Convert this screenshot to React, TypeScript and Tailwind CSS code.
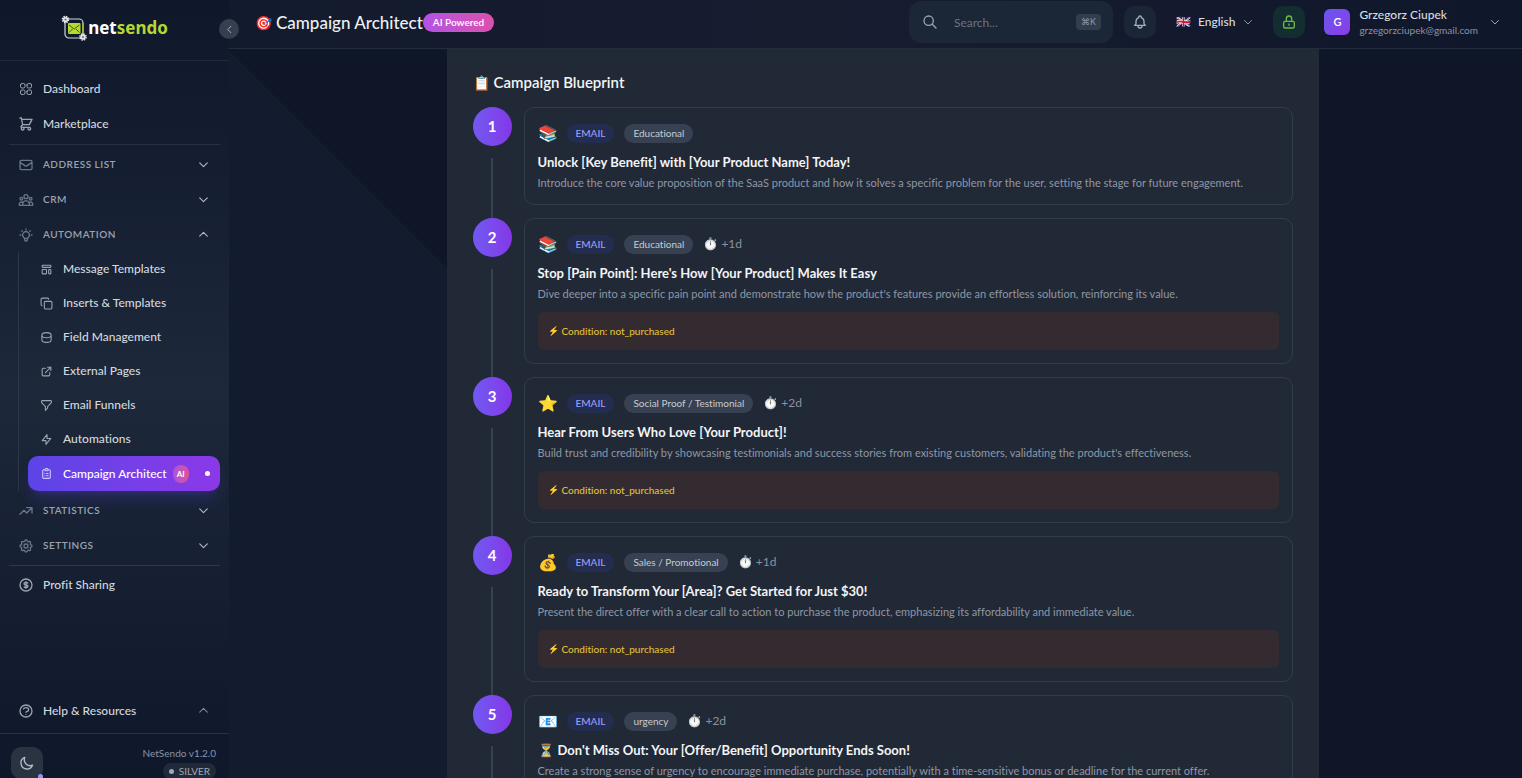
import type { ReactNode } from "react";
import type { IconType } from "react-icons";
import {
  HiOutlineBell,
  HiOutlineChevronDown,
  HiOutlineChevronLeft,
  HiOutlineChevronUp,
  HiOutlineClipboardList,
  HiOutlineCog,
  HiOutlineCurrencyDollar,
  HiOutlineExternalLink,
  HiOutlineFilter,
  HiOutlineLightBulb,
  HiOutlineLightningBolt,
  HiOutlineLockClosed,
  HiOutlineMail,
  HiOutlineMoon,
  HiOutlineQuestionMarkCircle,
  HiOutlineSearch,
  HiOutlineShoppingCart,
  HiOutlineTemplate,
  HiOutlineTrendingUp,
  HiOutlineUserGroup,
} from "react-icons/hi";
import { HiOutlineSquares2X2 } from "react-icons/hi2";
import { LuCopy } from "react-icons/lu";

function CylinderIcon({ className }: { className?: string }) {
  return (
    <svg viewBox="0 0 24 24" fill="none" stroke="currentColor" strokeWidth="2" className={className} aria-hidden="true">
      <path d="M3.500 8c0-3 3-5 8.500-5s8.500 2 8.500 5v8c0 3-3 5-8.500 5s-8.500-2-8.500-5z" />
      <path d="M3.500 9c1 2.500 4 3.500 8.500 3.500s7.500-1 8.500-3.500" />
    </svg>
  );
}

function Gear({ cx, cy }: { cx: number; cy: number }) {
  return (
    <g transform={`translate(${cx} ${cy})`}>
      <circle r="3.100" fill="none" stroke="#e5e7eb" strokeWidth="1.500" strokeDasharray="1.400 1.035" />
      <circle r="2.700" fill="#e5e7eb" />
      <circle r="1.100" fill="#64748b" />
    </g>
  );
}

function Logo() {
  return (
    <a href="#home" className="flex items-center" aria-label="netsendo">
      <svg viewBox="0 0 27 26" className="h-[26px] w-[27px]" aria-hidden="true">
        <rect x="4" y="4" width="18" height="19" rx="4" fill="none" stroke="#cbd5e1" strokeWidth="1.200" />
        <path d="M22 8v11" stroke="#a3c51f" strokeWidth="1.200" />
        <rect x="7" y="8" width="12.500" height="11" rx="1" fill="#b9d92c" />
        <path d="M8 10l5.200 4 5.200-4M8 17.500l3.500-3.500M18.500 17.500l-3.500-3.500" fill="none" stroke="#2c5a3c" strokeWidth="1" />
        <Gear cx={4.5} cy={4.5} />
        <Gear cx={22} cy={22} />
      </svg>
      <span className="font-['Noto_Sans'] text-[17px] leading-6 font-bold text-white">
        net<span className="text-[#b5d733]">sendo</span>
      </span>
    </a>
  );
}

function NavItem({ icon: Icon, children }: { icon: IconType; children: ReactNode }) {
  return (
    <a href="#nav" className="flex h-[35px] items-center gap-[9px] px-[9px] text-[12px] font-medium text-[#d3d8df]">
      <Icon className="size-4 text-[#9ca3af]" />
      {children}
    </a>
  );
}

function NavGroup({ icon: Icon, label, open }: { icon: IconType; label: string; open?: boolean }) {
  const Chevron = open ? HiOutlineChevronUp : HiOutlineChevronDown;
  return (
    <button
      type="button"
      aria-expanded={!!open}
      className="flex h-[35px] w-full items-center gap-[9px] pr-[10px] pl-[9px] text-left text-[10px] font-semibold tracking-wider text-[#9aa3b1] uppercase"
    >
      <Icon className="size-4 text-[#6b7686]" />
      <span className="flex-1">{label}</span>
      <Chevron className="size-[13px] text-[#b4bbc6]" />
    </button>
  );
}

const subItems: { icon: IconType | typeof CylinderIcon; label: string }[] = [
  { icon: HiOutlineTemplate, label: "Message Templates" },
  { icon: LuCopy, label: "Inserts & Templates" },
  { icon: CylinderIcon, label: "Field Management" },
  { icon: HiOutlineExternalLink, label: "External Pages" },
  { icon: HiOutlineFilter, label: "Email Funnels" },
  { icon: HiOutlineLightningBolt, label: "Automations" },
];

function Sidebar() {
  return (
    <aside className="relative flex h-full w-[229px] shrink-0 flex-col bg-linear-to-b from-[#0f172a] via-[#1d283a] to-[#0f172a]">
      <div className="flex h-[61px] shrink-0 items-center justify-center border-b border-[#1f2937] pb-1">
        <Logo />
      </div>
      <button
        type="button"
        aria-label="Collapse sidebar"
        className="absolute top-[19px] -right-[10px] z-10 flex size-5 items-center justify-center rounded-full bg-[#353f50] text-[#aab2be]"
      >
        <HiOutlineChevronLeft className="size-[11px]" />
      </button>
      <nav className="min-h-0 flex-1 overflow-hidden px-[9px] pt-[10px]">
        <NavItem icon={HiOutlineSquares2X2}>Dashboard</NavItem>
        <NavItem icon={HiOutlineShoppingCart}>Marketplace</NavItem>
        <hr className="mt-[3px] mb-0.5 border-[#263143]" />
        <NavGroup icon={HiOutlineMail} label="Address List" />
        <NavGroup icon={HiOutlineUserGroup} label="CRM" />
        <NavGroup icon={HiOutlineLightBulb} label="Automation" open />
        <div className="ml-[9px] border-l border-[#2c3747] pl-[9px]">
          {subItems.map(({ icon: Icon, label }) => (
            <a key={label} href="#sub" className="flex h-[34px] items-center gap-[10px] pl-3 text-[12px] font-medium text-[#d3d8df]">
              <Icon className="size-[13px] text-[#9ca3af]" />
              {label}
            </a>
          ))}
          <a
            href="#architect"
            aria-current="page"
            className="flex h-[35px] items-center rounded-[10px] bg-linear-to-r from-[#5b44e6] to-[#8b38e8] pr-[10px] pl-3 text-[12px] font-medium text-white shadow-lg shadow-[#5b44e6]/25"
          >
            <HiOutlineClipboardList className="mr-[10px] size-[13px] text-[#cfc9fb]" />
            Campaign Architect
            <span className="ml-1.5 rounded-full bg-linear-to-r from-[#a855d8] to-[#dd4f9a] px-1 text-[8px] leading-[18px] font-bold">AI</span>
            <span className="ml-auto size-[5px] rounded-full bg-white" />
          </a>
        </div>
        <div className="pt-0.5">
          <NavGroup icon={HiOutlineTrendingUp} label="Statistics" />
          <NavGroup icon={HiOutlineCog} label="Settings" />
        </div>
        <hr className="mt-0.5 mb-px border-[#2c3748]" />
        <NavItem icon={HiOutlineCurrencyDollar}>Profit Sharing</NavItem>
      </nav>
      <div className="shrink-0 px-[9px] pb-[5px]">
        <button type="button" className="flex h-[35px] w-full items-center gap-[9px] pr-[10px] pl-[9px] text-left text-[12px] font-medium text-[#d3d8df]">
          <HiOutlineQuestionMarkCircle className="size-4 text-[#9ca3af]" />
          <span className="flex-1">Help &amp; Resources</span>
          <HiOutlineChevronUp className="size-[13px] text-[#7c8594]" />
        </button>
      </div>
      <div className="flex h-[45px] shrink-0 items-start justify-between overflow-hidden border-t border-[#263143] pr-[13px] pl-[11px]">
        <button type="button" aria-label="Toggle theme" className="relative mt-[13px] flex size-8 shrink-0 items-center justify-center rounded-[10px] bg-[#2a3342] text-[#b4bbc6]">
          <HiOutlineMoon className="size-4" />
          <span className="absolute right-0 bottom-0 size-[5px] rounded-full bg-[#9a93f5]" />
        </button>
        <div className="flex shrink-0 flex-col items-end gap-[3px] pt-3">
          <span className="text-[10px] leading-[14px] text-[#8a93a3]">NetSendo v1.2.0</span>
          <span className="flex items-center gap-[5px] rounded-full bg-[#202a3a] px-1.5 text-[10px] leading-4 text-[#a0a8b5]">
            <span className="size-[5px] rounded-full bg-[#a0a8b5]" />
            SILVER
          </span>
        </div>
      </div>
    </aside>
  );
}

function Header() {
  return (
    <header className="flex h-[49px] shrink-0 items-start justify-between border-b border-[#232d3e] bg-linear-to-r from-[#121b2d] via-[#181c30] to-[#0f172a] pr-[21px] pl-[26px]">
      <div className="flex items-center pt-3">
        <h1 className="flex items-center gap-1 text-[17px] leading-[21px] font-medium text-[#eef0f4]">
          <span className="text-[14px]">🎯</span>
          Campaign Architect
        </h1>
        <span className="rounded-full bg-linear-to-r from-[#b152e6] to-[#dc4fab] px-[10px] text-[10px] leading-[19px] font-semibold text-white">AI Powered</span>
      </div>
      <div className="flex items-center pt-px">
        <div className="flex h-[42px] w-[204px] items-center rounded-xl bg-[#1b2637] pr-3 pl-[13px]">
          <HiOutlineSearch className="size-4 shrink-0 text-[#9ca3af]" />
          <input
            type="search"
            aria-label="Search"
            placeholder="Search..."
            className="ml-4 h-6 min-w-0 flex-1 bg-transparent text-[12px] text-white outline-none placeholder:text-[#6b7483]"
          />
          <kbd className="rounded-sm bg-[#333d4c] px-[5px] font-['Inter','DejaVu_Sans'] text-[9px] leading-4 text-[#8b94a2]">⌘K</kbd>
        </div>
        <button type="button" aria-label="Notifications" className="ml-[11px] flex size-8 items-center justify-center rounded-[10px] bg-[#1a2536] text-[#a5adb9]">
          <HiOutlineBell className="size-4" />
        </button>
        <button type="button" className="ml-5 flex items-center text-[12px] font-medium text-[#d8dce3]">
          <span className="mr-2 w-[14px] text-[12px]">🇬🇧</span>
          English
          <HiOutlineChevronDown className="ml-[7px] size-3 text-[#8f98a6]" />
        </button>
        <button type="button" aria-label="Security" className="ml-[19px] flex size-8 items-center justify-center rounded-[10px] bg-[#132e30] text-[#71b843]">
          <HiOutlineLockClosed className="size-4" />
        </button>
        <button type="button" className="ml-[19px] flex items-center text-left">
          <span className="flex size-[26px] items-center justify-center rounded-md bg-linear-to-br from-[#6a55f0] to-[#8a3ae8] text-[11px] font-semibold text-white">G</span>
          <span className="ml-[9px] flex flex-col">
            <span className="text-[12px] leading-4 font-medium text-[#d8dce3]">Grzegorz Ciupek</span>
            <span className="text-[10px] leading-[14px] text-[#8a93a3]">grzegorzciupek@gmail.com</span>
          </span>
          <HiOutlineChevronDown className="ml-[11px] size-3 text-[#9ca3af]" />
        </button>
      </div>
    </header>
  );
}

type Step = {
  emoji: string;
  category: string;
  delay?: string;
  titleEmoji?: string;
  title: string;
  text: string;
  condition?: string;
};

const steps: Step[] = [
  {
    emoji: "📚",
    category: "Educational",
    title: "Unlock [Key Benefit] with [Your Product Name] Today!",
    text: "Introduce the core value proposition of the SaaS product and how it solves a specific problem for the user, setting the stage for future engagement.",
  },
  {
    emoji: "📚",
    category: "Educational",
    delay: "+1d",
    title: "Stop [Pain Point]: Here's How [Your Product] Makes It Easy",
    text: "Dive deeper into a specific pain point and demonstrate how the product's features provide an effortless solution, reinforcing its value.",
    condition: "not_purchased",
  },
  {
    emoji: "⭐",
    category: "Social Proof / Testimonial",
    delay: "+2d",
    title: "Hear From Users Who Love [Your Product]!",
    text: "Build trust and credibility by showcasing testimonials and success stories from existing customers, validating the product's effectiveness.",
    condition: "not_purchased",
  },
  {
    emoji: "💰",
    category: "Sales / Promotional",
    delay: "+1d",
    title: "Ready to Transform Your [Area]? Get Started for Just $30!",
    text: "Present the direct offer with a clear call to action to purchase the product, emphasizing its affordability and immediate value.",
    condition: "not_purchased",
  },
  {
    emoji: "📧",
    category: "urgency",
    delay: "+2d",
    titleEmoji: "⏳",
    title: "Don't Miss Out: Your [Offer/Benefit] Opportunity Ends Soon!",
    text: "Create a strong sense of urgency to encourage immediate purchase, potentially with a time-sensitive bonus or deadline for the current offer.",
    condition: "not_purchased",
  },
];

function StepRow({ step, number }: { step: Step; number: number }) {
  return (
    <li className="flex gap-3">
      <div className="flex w-[39px] shrink-0 flex-col items-center">
        <span className="flex size-[39px] shrink-0 items-center justify-center rounded-full bg-linear-to-r from-[#7059f0] to-[#8436e8] text-[15px] font-bold text-white">
          {number}
        </span>
        <span className="mt-3 w-0.5 flex-1 bg-[#374151]" />
      </div>
      <article className="mb-[13px] min-w-0 flex-1 rounded-[10px] border border-[#323c4b] p-[13px]">
        <div className="flex h-6 items-center gap-[10px]">
          <span className="w-[19px] text-[16px] leading-5">{step.emoji}</span>
          <span className="rounded-full bg-[#222d50] px-[9px] text-[10px] leading-[19px] font-medium text-[#a39df5]">EMAIL</span>
          <span className="rounded-full bg-[#374151] px-[9px] text-[10px] leading-[19px] text-[#c6ccd4]">{step.category}</span>
          {step.delay && (
            <span className="flex items-center gap-[3px] text-[12px] leading-4 text-[#8a92a0]">
              <span className="text-[12px]">⏱️</span>
              {step.delay}
            </span>
          )}
        </div>
        <h3 className="mt-[7px] flex items-center gap-1 text-[13px] leading-5 font-bold text-[#f3f4f6]">
          {step.titleEmoji && <span>{step.titleEmoji}</span>}
          {step.title}
        </h3>
        <p className="mt-[3px] text-[11px] leading-4 text-[#8f97a5]">{step.text}</p>
        {step.condition && (
          <p className="mt-[10px] flex h-[38px] items-center gap-[3px] rounded-md bg-[#332b30] px-[10px] text-[10px] font-medium text-[#e0c03c]">
            <span className="w-[11px] text-[9px]">⚡</span>
            Condition: {step.condition}
          </p>
        )}
      </article>
    </li>
  );
}

export default function App() {
  return (
    <div className="flex h-screen overflow-hidden bg-[#0f172a] font-['Lato',sans-serif] antialiased [font-variant-ligatures:no-common-ligatures]">
      <Sidebar />
      <div className="flex min-w-0 flex-1 flex-col">
        <Header />
        <main className="min-h-0 flex-1 overflow-hidden bg-[linear-gradient(45deg,#131c2e_36%,#0e1628_36%)] pr-4 pl-[30px]">
          <section className="mx-auto max-w-[872px] bg-[#212937] px-[26px] pt-[23px]">
            <h2 className="mb-[14px] flex items-center gap-1 text-[15px] leading-[21px] font-semibold text-[#f3f4f6]">
              <span className="text-[14px]">📋</span>
              Campaign Blueprint
            </h2>
            <ol>
              {steps.map((step, i) => (
                <StepRow key={i} step={step} number={i + 1} />
              ))}
            </ol>
          </section>
        </main>
      </div>
    </div>
  );
}
